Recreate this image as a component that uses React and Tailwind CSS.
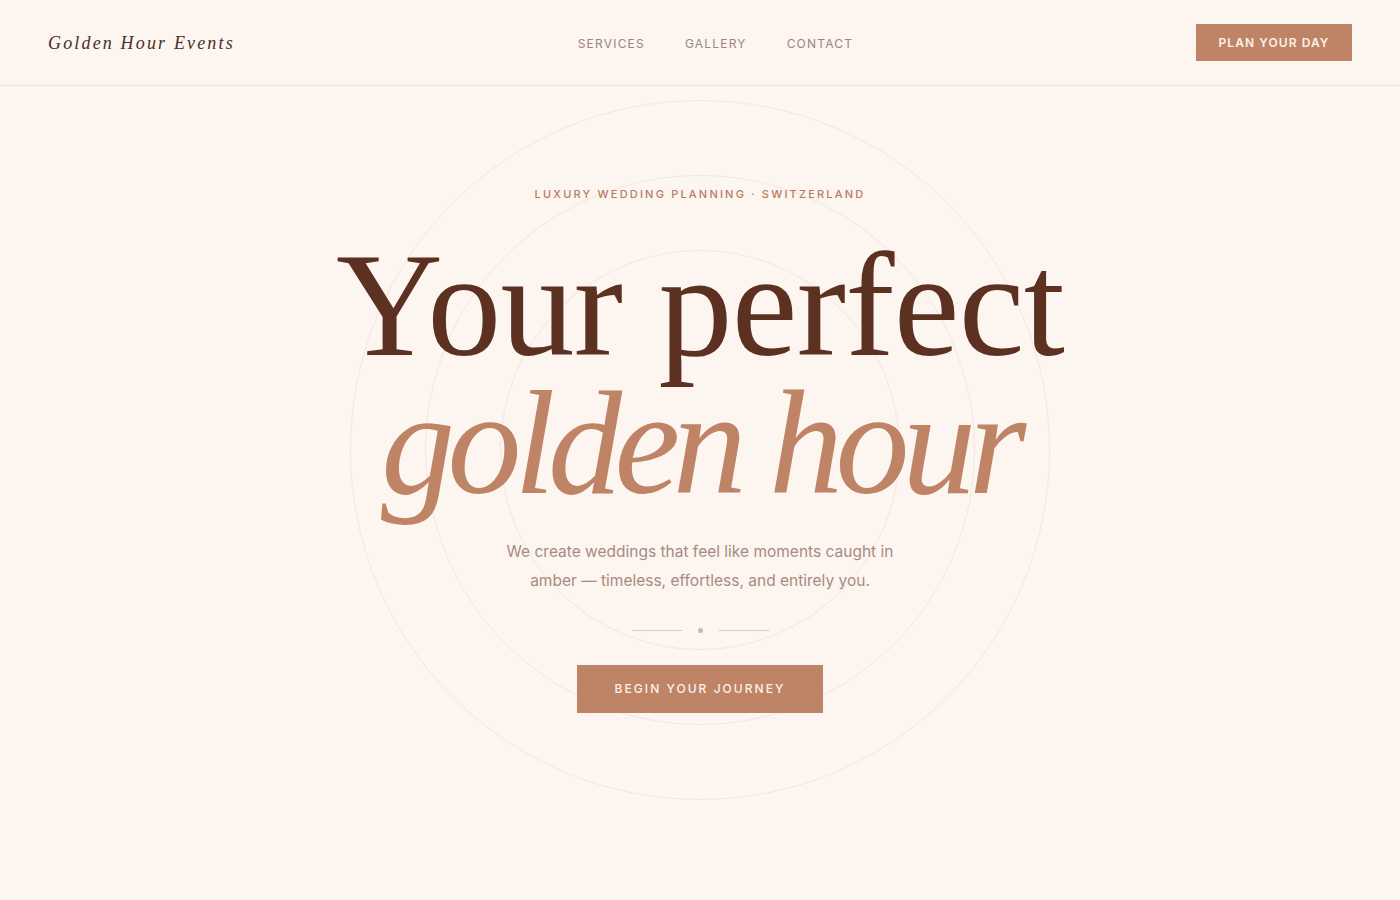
import React from "react";

const serif = { fontFamily: '"Liberation Serif", "DejaVu Serif", serif' };
const sans = { fontFamily: 'Inter, "Noto Sans", sans-serif' };

function Header() {
  return (
    <header className="h-[86px] border-b border-[#efe2da] flex items-center justify-between px-12">
      <a href="#" className="text-[18px] italic tracking-[0.12em] text-[#4a2f27] pt-[2px]" style={serif}>
        Golden Hour Events
      </a>
      <nav className="flex items-center gap-10 text-[12px] tracking-[0.1em] text-[#9c857a] pt-[3px]" style={sans}>
        <a href="#">SERVICES</a>
        <a href="#">GALLERY</a>
        <a href="#">CONTACT</a>
      </nav>
      <button className="h-[37px] w-[156px] bg-[#bf8466] text-[#fcf1ea] text-[12px] font-semibold tracking-[0.09em]" style={sans}>
        PLAN YOUR DAY
      </button>
    </header>
  );
}

function Rings() {
  return (
    <div className="absolute inset-0 pointer-events-none flex items-start justify-center">
      <div className="relative mt-[14px] w-[700px] h-[700px]">
        <div className="absolute inset-0 rounded-full border border-[#f2e7e0]" />
        <div className="absolute inset-[75px] rounded-full border border-[#f2e7e0]" />
        <div className="absolute inset-[150px] rounded-full border border-[#f2e7e0]" />
      </div>
    </div>
  );
}

export default function App() {
  return (
    <div className="min-h-screen bg-[#fcf5f0]">
      <Header />
      <main className="relative h-[814px] overflow-hidden">
        <Rings />
        <div className="relative flex flex-col items-center pt-[100px]">
          <p className="text-[11px] tracking-[0.2em] text-[#b97b5e] font-medium" style={sans}>
            LUXURY WEDDING PLANNING · SWITZERLAND
          </p>
          <h1 className="mt-[33px] text-center text-[148px] leading-[138px] font-normal" style={serif}>
            <span className="block text-[#5c3122] tracking-[-0.005em]">Your perfect</span>
            <span className="block italic text-[#bf8466] tracking-[-0.05em]">golden hour</span>
          </h1>
          <p className="mt-[25px] max-w-[400px] text-center text-[15.5px] leading-[29px] text-[#a88b80]" style={sans}>
            We create weddings that feel like moments caught in amber — timeless, effortless, and entirely you.
          </p>
          <div className="mt-[33px] flex items-center gap-[16px]">
            <span className="w-[50px] h-px bg-[#dcc7bc]" />
            <span className="w-[5px] h-[5px] rounded-full bg-[#d3b3a3]" />
            <span className="w-[50px] h-px bg-[#dcc7bc]" />
          </div>
          <button className="mt-[32px] w-[246px] h-[48px] bg-[#bf8466] text-[#fcf1ea] text-[12px] font-medium tracking-[0.17em]" style={sans}>
            BEGIN YOUR JOURNEY
          </button>
        </div>
      </main>
    </div>
  );
}
